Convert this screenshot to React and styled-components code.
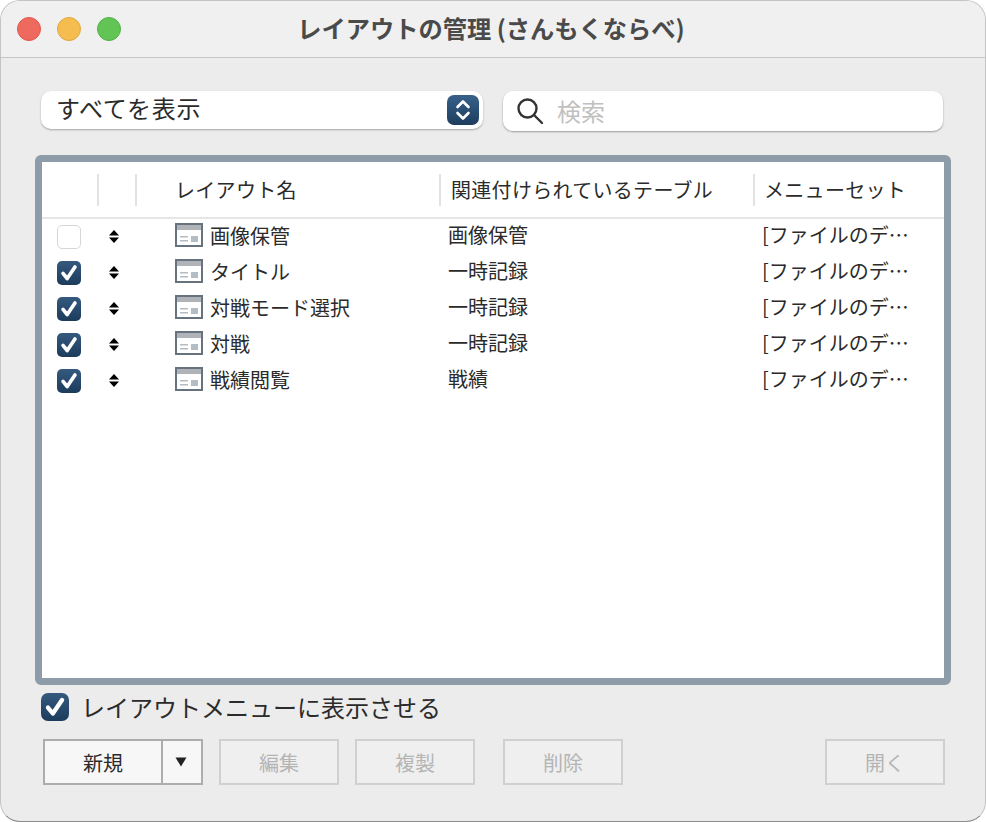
import styled, { createGlobalStyle } from "styled-components";

const GlobalStyle = createGlobalStyle`
  html, body {
    margin: 0;
    padding: 0;
    background: #ffffff;
  }
  body {
    font-family: "Noto Sans CJK JP", "Liberation Sans", sans-serif;
    color: #2b2b2b;
  }
  * {
    box-sizing: border-box;
  }
`;

const Window = styled.div`
  width: 986px;
  height: 822px;
  display: flex;
  flex-direction: column;
  background: #ececec;
  border: 1px solid #c4c4c4;
  border-bottom-color: #8c8c8c;
  border-radius: 20px;
  overflow: hidden;
`;

const TitleBar = styled.div`
  position: relative;
  height: 57px;
  flex: none;
  display: flex;
  align-items: center;
  justify-content: center;
  background: #f0f0f0;
  border-bottom: 1px solid #c6c6c6;
`;

const Lights = styled.div`
  position: absolute;
  left: 16px;
  top: 16px;
  display: flex;
  gap: 16px;
`;

const Light = styled.span`
  width: 24px;
  height: 24px;
  border-radius: 50%;
  background: ${(props) => props.$color};
  border: 1px solid ${(props) => props.$edge};
`;

const Title = styled.h1`
  margin: 0 0 1px -4px;
  font-size: 24.25px;
  font-weight: 700;
  line-height: 1;
  color: #4a4a4a;
`;

const Toolbar = styled.div`
  display: flex;
  gap: 20px;
  padding: 33px 0 0 40px;
`;

const Popup = styled.div`
  width: 442px;
  height: 38px;
  display: flex;
  align-items: center;
  justify-content: space-between;
  padding: 0 4px 0 15px;
  background: #ffffff;
  border-radius: 10px;
  box-shadow: 0 1px 2px rgba(0, 0, 0, 0.3);
  font-size: 24px;
`;

const PopupLabel = styled.span`
  margin-bottom: 5px;
  letter-spacing: 0.7px;
`;

const Stepper = styled.span`
  width: 32px;
  height: 30px;
  display: flex;
  align-items: center;
  justify-content: center;
  border-radius: 7px;
  background: linear-gradient(#38618a, #1d3d5e);
`;

const SearchBox = styled.div`
  width: 440px;
  height: 40px;
  display: flex;
  align-items: center;
  gap: 13px;
  padding-left: 13px;
  background: #ffffff;
  border-radius: 10px;
  box-shadow: 0 1px 2px rgba(0, 0, 0, 0.35);
  font-size: 24px;
  color: #c0c0c0;
`;

const SearchHint = styled.span`
  margin-bottom: 2px;
`;

const TableFrame = styled.div`
  width: 916px;
  height: 530px;
  margin: 24px 0 0 34px;
  flex: none;
  background: #ffffff;
  border: 7px solid #8e9caa;
  border-radius: 6px;
`;

const columns = "56px 38px 304px 314px 188px";

const HeaderRow = styled.div`
  display: grid;
  grid-template-columns: ${columns};
  align-items: center;
  height: 57px;
  border-bottom: 2px solid #e6e6e6;
  font-size: 20px;
`;

const HeaderCell = styled.div`
  height: 32px;
  margin-left: -1px;
  line-height: 31px;
  padding-left: ${(props) => props.$pad || 0}px;
  border-left: ${(props) => (props.$first ? "none" : "2px solid #e2e2e2")};
  white-space: nowrap;
  letter-spacing: 0.3px;
`;

const Row = styled.div`
  display: grid;
  grid-template-columns: ${columns};
  align-items: center;
  height: 36px;
  font-size: 20px;
`;

const CheckCell = styled.div`
  padding-left: 15px;
  display: flex;
`;

const SortCell = styled.div`
  display: flex;
  padding: 0 0 1px 10px;
`;

const NameCell = styled.div`
  display: flex;
  align-items: center;
  gap: 7px;
  padding: 0 0 4px 39px;
`;

const TextCell = styled.div`
  padding: 0 0 4px 8px;
  white-space: nowrap;
  line-height: 28px;
`;

const MenuCell = styled.div`
  padding: 0 0 4px 8px;
  white-space: nowrap;
  line-height: 28px;
`;

const Box = styled.span`
  flex: none;
  width: ${(props) => props.$size}px;
  height: ${(props) => props.$size}px;
  display: flex;
  align-items: center;
  justify-content: center;
  border-radius: ${(props) => (props.$size > 24 ? 7 : 5)}px;
  background: ${(props) =>
    props.$checked ? "linear-gradient(#35597f, #1d3c5c)" : "#ffffff"};
  border: ${(props) => (props.$checked ? "none" : "1px solid #d6d6d6")};
`;

const ShowRow = styled.label`
  display: flex;
  align-items: center;
  gap: 12px;
  height: 28px;
  margin: 8px 0 0 40px;
  font-size: 24px;
`;

const ShowLabel = styled.span`
  margin-bottom: 2px;
`;

const ButtonRow = styled.div`
  display: flex;
  padding: 18px 0 0 42px;
`;

const Button = styled.div`
  width: ${(props) => props.$width || 120}px;
  height: 46px;
  margin-left: ${(props) => props.$gap || 0}px;
  display: flex;
  align-items: center;
  justify-content: center;
  font-size: 20px;
  background: ${(props) => (props.$enabled ? "#f7f7f7" : "#efefef")};
  color: ${(props) => (props.$enabled ? "#2b2b2b" : "#b4b4b4")};
  border: 2px solid ${(props) => (props.$enabled ? "#adadad" : "#d0d0d0")};
`;

const SplitArrow = styled(Button)`
  border-left-width: 0;
  padding-right: 2px;
`;

const Chevrons = () => (
  <svg width="18" height="24" viewBox="0 0 18 24" fill="none" stroke="#fff" strokeWidth="2.6" strokeLinecap="round" strokeLinejoin="round">
    <path d="M3.5 9 9 3.5 14.5 9" />
    <path d="M3.5 15 9 20.5 14.5 15" />
  </svg>
);

const SearchIcon = () => (
  <svg width="28" height="28" viewBox="0 0 28 28" fill="none" stroke="#333" strokeWidth="2.4" strokeLinecap="round">
    <circle cx="11.5" cy="11.5" r="9" />
    <path d="M18 18 26 26" />
  </svg>
);

const Check = ({ size }) => (
  <svg width={size} height={size} viewBox="0 0 24 24" fill="none" stroke="#fff" strokeWidth="4" strokeLinecap="round" strokeLinejoin="round">
    <path d="M5.5 12.5 10 18 18.5 5.5" />
  </svg>
);

const SortArrows = () => (
  <svg width="12" height="13" viewBox="0 0 12 13" fill="#000">
    <path d="M6 0 11 5.5H1Z" />
    <path d="M6 13 11 7.5H1Z" />
  </svg>
);

const LayoutIcon = () => (
  <svg width="28" height="24" viewBox="0 0 28 24" style={{ flex: "none" }}>
    <rect x="1" y="1" width="26" height="22" fill="#fff" stroke="#66727e" strokeWidth="2" />
    <rect x="2" y="2" width="24" height="5" fill="#b0b4b8" />
    <rect x="5" y="13" width="8" height="1.5" fill="#b4bcc4" />
    <rect x="5" y="17" width="8" height="1.5" fill="#b4bcc4" />
    <rect x="16" y="13" width="7" height="6" fill="#b4bcc4" />
  </svg>
);

const layouts = [
  { id: 1, name: "画像保管", table: "画像保管", shown: false },
  { id: 2, name: "タイトル", table: "一時記録", shown: true },
  { id: 3, name: "対戦モード選択", table: "一時記録", shown: true },
  { id: 4, name: "対戦", table: "一時記録", shown: true },
  { id: 5, name: "戦績閲覧", table: "戦績", shown: true },
];

const App = () => {
  return (
    <>
      <GlobalStyle />
      <Window>
        <TitleBar>
          <Lights>
            <Light $color="#ee6a5f" $edge="#e0574c" />
            <Light $color="#f5bd4f" $edge="#e0a63c" />
            <Light $color="#61c454" $edge="#53b046" />
          </Lights>
          <Title>レイアウトの管理 (さんもくならべ)</Title>
        </TitleBar>
        <Toolbar>
          <Popup>
            <PopupLabel>すべてを表示</PopupLabel>
            <Stepper>
              <Chevrons />
            </Stepper>
          </Popup>
          <SearchBox>
            <SearchIcon />
            <SearchHint>検索</SearchHint>
          </SearchBox>
        </Toolbar>
        <TableFrame>
          <HeaderRow>
            <HeaderCell $first />
            <HeaderCell />
            <HeaderCell $pad={38}>レイアウト名</HeaderCell>
            <HeaderCell $pad={10}>関連付けられているテーブル</HeaderCell>
            <HeaderCell $pad={9}>メニューセット</HeaderCell>
          </HeaderRow>
          {layouts.map((layout) => (
            <Row key={layout.id}>
              <CheckCell>
                <Box $size={24} $checked={layout.shown}>
                  {layout.shown && <Check size={22} />}
                </Box>
              </CheckCell>
              <SortCell>
                <SortArrows />
              </SortCell>
              <NameCell>
                <LayoutIcon />
                {layout.name}
              </NameCell>
              <TextCell>{layout.table}</TextCell>
              <MenuCell>[ファイルのデ…</MenuCell>
            </Row>
          ))}
        </TableFrame>
        <ShowRow>
          <Box $size={28} $checked>
            <Check size={26} />
          </Box>
          <ShowLabel>レイアウトメニューに表示させる</ShowLabel>
        </ShowRow>
        <ButtonRow>
          <Button $enabled>新規</Button>
          <SplitArrow $enabled $width={40}>
            <svg width="12" height="10" viewBox="0 0 12 10" fill="#222">
              <path d="M0.5 0.5H11.5L6 9.5Z" />
            </svg>
          </SplitArrow>
          <Button $gap={16}>編集</Button>
          <Button $gap={16}>複製</Button>
          <Button $gap={28}>削除</Button>
          <Button $gap={202}>開く</Button>
        </ButtonRow>
      </Window>
    </>
  );
};

export default App;
